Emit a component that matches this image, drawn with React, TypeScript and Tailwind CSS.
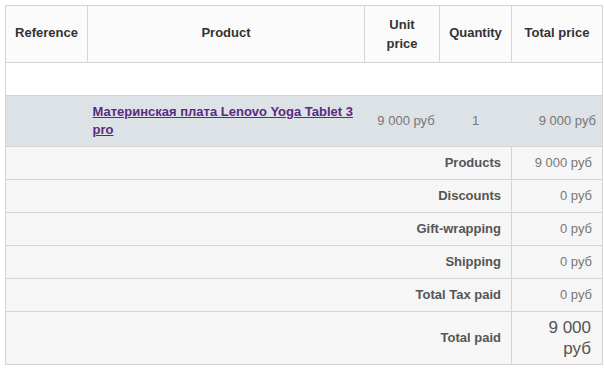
import React from "react";

const summary = [
  { label: "Products", value: "9 000 руб" },
  { label: "Discounts", value: "0 руб" },
  { label: "Gift-wrapping", value: "0 руб" },
  { label: "Shipping", value: "0 руб" },
  { label: "Total Tax paid", value: "0 руб" },
];

export default function App() {
  return (
    <div className="bg-white w-[604px] h-[369px] pt-[5px] pl-[5px] font-['Liberation_Sans',Arial,sans-serif] text-[13px] text-[#333]">
      <table className="table-fixed border-collapse border border-[#d6d4d4] w-[597px]">
        <colgroup>
          <col className="w-[82px]" />
          <col className="w-[277px]" />
          <col className="w-[75px]" />
          <col className="w-[72px]" />
          <col className="w-[91px]" />
        </colgroup>
        <thead>
          <tr className="h-[57px] bg-[#fbfbfb]">
            <th className="border border-[#d6d4d4] font-bold leading-[19px] px-2 pb-[3px]">Reference</th>
            <th className="border border-[#d6d4d4] font-bold leading-[19px] px-2 pb-[3px]">Product</th>
            <th className="border border-[#d6d4d4] font-bold leading-[19px] px-2">
              Unit
              <br />
              price
            </th>
            <th className="border border-[#d6d4d4] font-bold leading-[19px] px-1 pb-[3px]">Quantity</th>
            <th className="border border-[#d6d4d4] font-bold leading-[19px] px-1 pb-[3px]">Total price</th>
          </tr>
        </thead>
        <tbody>
          <tr className="h-[33px] bg-white">
            <td colSpan={5} className="border border-[#d6d4d4]"></td>
          </tr>
          <tr className="h-[51px] bg-[#dde2e6] text-[#777]">
            <td className="border-y border-[#d6d4d4]"></td>
            <td className="border-y border-[#d6d4d4] px-[5px] align-middle">
              <a href="#" className="font-bold text-[#5a2a82] underline leading-[18px] block">
                Материнская плата Lenovo Yoga Tablet 3 pro
              </a>
            </td>
            <td className="border-y border-[#d6d4d4] text-center pl-2">9 000 руб</td>
            <td className="border-y border-[#d6d4d4] text-center">1</td>
            <td className="border-y border-[#d6d4d4] text-right pr-[6px]">9 000 руб</td>
          </tr>
        </tbody>
        <tfoot>
          {summary.map((row) => (
            <tr key={row.label} className="h-[33px] bg-[#f6f6f6]">
              <td colSpan={4} className="border border-[#d6d4d4] text-right pr-[10px] font-bold text-[#555]">
                {row.label}
              </td>
              <td className="border border-[#d6d4d4] text-right pr-[10px] text-[#777]">{row.value}</td>
            </tr>
          ))}
          <tr className="h-[53px] bg-[#f6f6f6]">
            <td colSpan={4} className="border border-[#d6d4d4] text-right pr-[10px] font-bold text-[#555]">
              Total paid
            </td>
            <td className="border border-[#d6d4d4] text-right pr-[11px] text-[#555] text-[17px] leading-[21px]">
              9 000
              <br />
              руб
            </td>
          </tr>
        </tfoot>
      </table>
    </div>
  );
}
